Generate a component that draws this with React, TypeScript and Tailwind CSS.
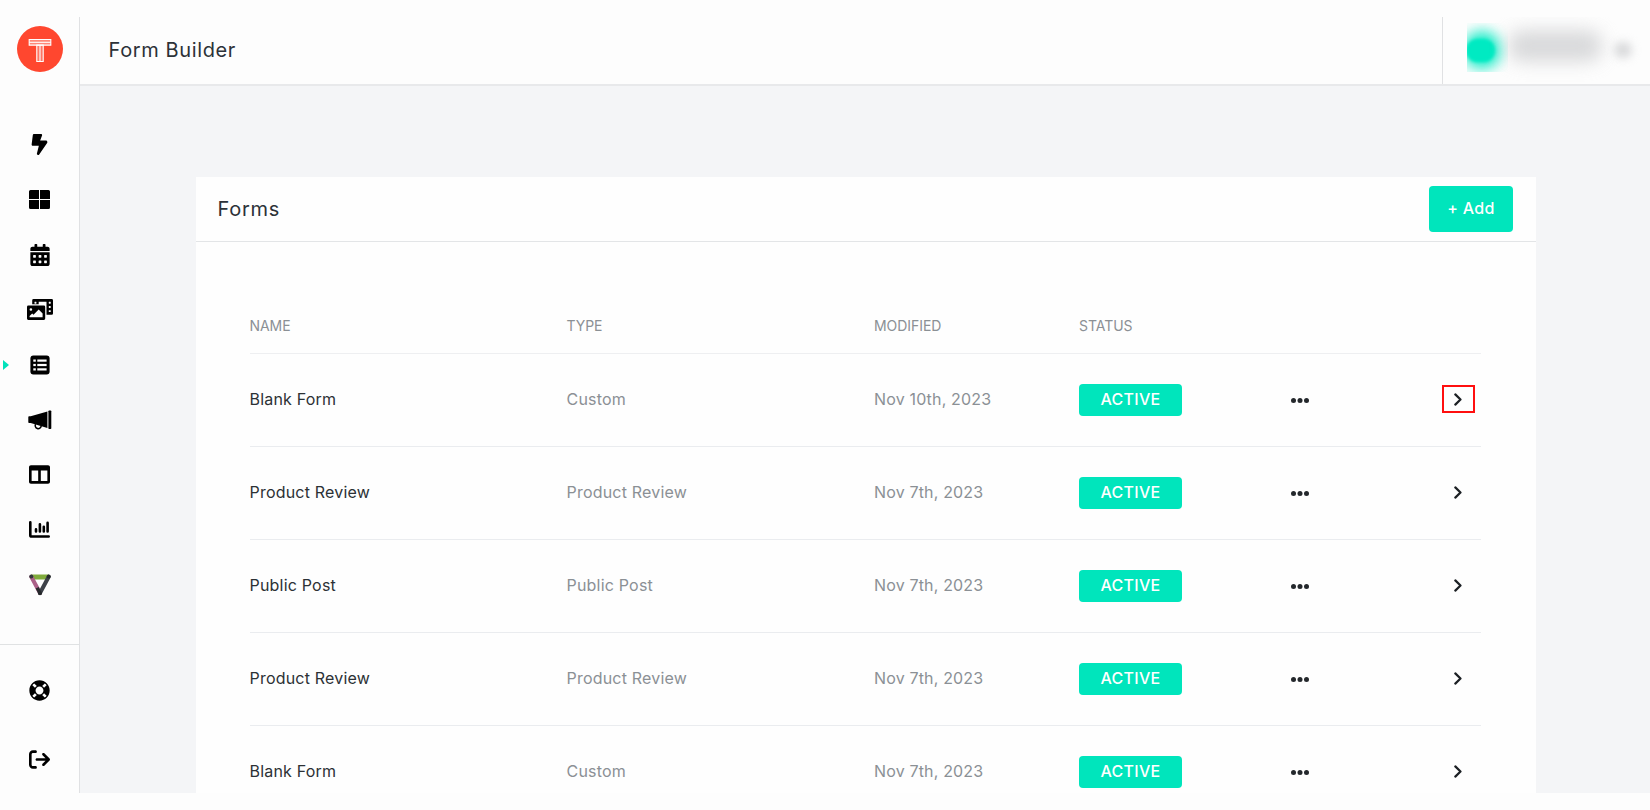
import React from 'react'
import { FaCalendarAlt, FaColumns, FaLifeRing, FaPhotoVideo } from 'react-icons/fa'
import { FaArrowRightFromBracket, FaBoltLightning } from 'react-icons/fa6'

interface FormItem {
  name: string
  type: string
  modified: string
  highlighted?: boolean
}

const forms: FormItem[] = [
  { name: 'Blank Form', type: 'Custom', modified: 'Nov 10th, 2023', highlighted: true },
  { name: 'Product Review', type: 'Product Review', modified: 'Nov 7th, 2023' },
  { name: 'Public Post', type: 'Public Post', modified: 'Nov 7th, 2023' },
  { name: 'Product Review', type: 'Product Review', modified: 'Nov 7th, 2023' },
  { name: 'Blank Form', type: 'Custom', modified: 'Nov 7th, 2023' },
]

const Logo = () => (
  <svg viewBox="0 0 46 46" className="h-[46px] w-[46px]">
    <circle cx="23" cy="23" r="23" fill="#ff472f" />
    <g fill="none" stroke="#fff" strokeWidth="1.100">
      <path d="M12.200 13.500h21.600v5.600H12.200z" fill="#fff" fillOpacity=".35" />
      <path d="M12.200 16.300h21.600" />
      <path d="M19.800 19.100h6.400v16.400h-6.400z" fill="#fff" fillOpacity=".25" />
      <path d="M23 19.100v16.400" />
    </g>
  </svg>
)

const TilesIcon = () => (
  <svg viewBox="0 0 21 19" className="h-[19px] w-[21px]">
    <path d="M1.5 0H10v9H0V1.5A1.5 1.5 0 0 1 1.5 0zM11 0h8.5A1.5 1.5 0 0 1 21 1.5V9H11zM0 10h10v9H1.5A1.5 1.5 0 0 1 0 17.500zM11 10h10v7.500a1.500 1.500 0 0 1-1.500 1.500H11z" />
  </svg>
)

const ListIcon = () => (
  <svg viewBox="0 0 20 20" className="h-5 w-5">
    <rect x=".4" y=".4" width="19.200" height="19.200" rx="3" />
    <g fill="#fff">
      <rect x="3.300" y="4.500" width="2.500" height="2.200" />
      <rect x="3.300" y="8.900" width="2.500" height="2.200" />
      <rect x="3.300" y="13.300" width="2.500" height="2.200" />
      <rect x="7.300" y="4.500" width="9.300" height="2.200" />
      <rect x="7.300" y="8.900" width="9.300" height="2.200" />
      <rect x="7.300" y="13.300" width="9.300" height="2.200" />
    </g>
  </svg>
)

const MegaphoneIcon = () => (
  <svg viewBox="0 0 24 20" className="h-5 w-6">
    <path d="M.3 7.200c0-.6.500-1 1-1h1.400L19.400 1.500v16.600L2.700 13H1.300c-.5 0-1-.4-1-1z" />
    <rect x="20.400" y=".5" width="2.900" height="18.600" rx=".8" />
    <path
      d="M7.600 14.200a3 3 0 1 0 5.600 1.700"
      fill="none"
      stroke="currentColor"
      strokeWidth="1.500"
    />
  </svg>
)

const ChartIcon = () => (
  <svg viewBox="0 0 21 17" className="h-[17px] w-[21px]">
    <g fill="none" stroke="currentColor" strokeLinecap="round">
      <path d="M1.300 1.300v12.900c0 .8.500 1.300 1.300 1.300h17.100" strokeWidth="2.600" />
      <path d="M7 8.400v2M10.900 3.200v7.200M14.800 5.800v4.600M18.600 1.900v8.500" strokeWidth="2.600" />
    </g>
  </svg>
)

const TriangleIcon = () => (
  <svg viewBox="0 0 22 22" className="h-[22px] w-[22px]">
    <g fill="none" strokeLinecap="round">
      <path d="M2 3h18" stroke="#80ab3c" strokeWidth="5" strokeLinecap="butt" />
      <path d="M2.300 2.800L11 19" stroke="#ab6088" strokeWidth="4" />
      <path d="M11 19l8.700-16.200" stroke="#3d4148" strokeWidth="4" />
    </g>
    <circle cx="2.300" cy="2.600" r="2" fill="#33373b" />
    <circle cx="19.700" cy="2.600" r="2" fill="#26292c" />
    <circle cx="11" cy="19.200" r="2" fill="#26292c" />
    <path d="M8.200 13.800l2.800 5.400" stroke="#26292c" strokeWidth="3.500" />
  </svg>
)

const navItems = [
  { key: 'activity', icon: <FaBoltLightning className="h-[21px] w-[21px]" /> },
  { key: 'dashboard', icon: <TilesIcon /> },
  { key: 'calendar', icon: <FaCalendarAlt className="h-[22px] w-[22px]" /> },
  { key: 'media', icon: <FaPhotoVideo className="h-[21px] w-[26px]" /> },
  { key: 'forms', icon: <ListIcon />, active: true },
  { key: 'campaigns', icon: <MegaphoneIcon /> },
  { key: 'layouts', icon: <FaColumns className="h-[21px] w-[21px]" /> },
  { key: 'reports', icon: <ChartIcon /> },
  { key: 'integrations', icon: <TriangleIcon /> },
]

const Sidebar = () => (
  <aside className="flex w-20 shrink-0 flex-col border-r border-[#e0e1e3] text-black">
    <div className="flex h-[100px] justify-center pt-[9px]">
      <Logo />
    </div>
    <nav className="flex h-[528px] flex-col border-b border-[#e0e2e3]">
      {navItems.map((item) => (
        <a
          key={item.key}
          href="#"
          className="relative flex h-[55px] shrink-0 items-center justify-center"
        >
          {item.active && (
            <span className="absolute left-[3px] top-[23px] h-0 w-0 border-y-[5px] border-l-[6px] border-y-transparent border-l-[#00e2bb]" />
          )}
          {item.icon}
        </a>
      ))}
    </nav>
    <a href="#" className="flex h-[91px] items-center justify-center">
      <FaLifeRing className="h-[21px] w-[21px]" />
    </a>
    <a href="#" className="flex h-[47px] items-center justify-center">
      <FaArrowRightFromBracket className="h-[21px] w-[21px]" />
    </a>
  </aside>
)

const UserMenu = () => (
  <div className="flex w-[208px] border-l border-[#e0e1e3] pl-6 pt-[6px]">
    <div className="flex h-[49px] w-[41px] items-center overflow-hidden">
      <div className="mt-[4px] h-[38px] w-[38px] shrink-0 -translate-x-[4px] rounded-full bg-[#00eac2] opacity-90 blur-[7px]" />
      <div className="-ml-[39px] mt-[5px] h-[23px] w-[29px] shrink-0 rounded-full bg-[#00eac2] blur-[1.500px]" />
    </div>
    <div className="mt-[7px] h-[32px] w-[94px] rounded-[14px] bg-[#cdced0] opacity-75 blur-[9px]" />
    <div className="ml-[12px] mt-[19px] h-[16px] w-[18px] rounded-full bg-[#cfd0d2] opacity-80 blur-[5px]" />
  </div>
)

const Chevron = () => (
  <svg
    viewBox="0 0 8 13"
    className="h-[13px] w-2"
    fill="none"
    stroke="#1c2024"
    strokeWidth="2.200"
    strokeLinecap="round"
    strokeLinejoin="round"
  >
    <path d="M1.300 1.400l5.200 5.100-5.200 5.100" />
  </svg>
)

const Dots = () => (
  <svg viewBox="0 0 18 5" className="mt-[2px] h-[5px] w-[18px]" fill="#24282c">
    <circle cx="2.500" cy="2.500" r="2.500" />
    <circle cx="9" cy="2.500" r="2.500" />
    <circle cx="15.500" cy="2.500" r="2.500" />
  </svg>
)

const columns = 'grid grid-cols-[317px_307.500px_205px_212px_1fr] items-center'

const FormRow: React.FC<{ form: FormItem }> = ({ form }) => (
  <div
    className={`${columns} h-[92.900px] border-b border-[#eaecef] text-[16px] tracking-[0.200px] text-[#8b9095]`}
  >
    <span className="pb-[2px] text-[#2c3135]">{form.name}</span>
    <span className="pb-[2px]">{form.type}</span>
    <span className="pb-[2px] tracking-[0.160px]">{form.modified}</span>
    <span className="flex h-8 w-[103px] items-center justify-center rounded bg-[#00e5bc] pb-[2px] font-medium tracking-[0.300px] text-white">
      ACTIVE
    </span>
    <div className="flex items-center justify-between pr-[6px]">
      <Dots />
      <button
        className={`-mt-[2px] flex h-7 w-[33px] items-center justify-center border-2 pr-[2px] pt-[2px] ${
          form.highlighted ? 'border-[#ff0f0f]' : 'border-transparent'
        }`}
      >
        <Chevron />
      </button>
    </div>
  </div>
)

const App = () => (
  <div className="h-[810px] w-[1650px] overflow-hidden bg-[#fdfdfd] py-[17px] font-['Inter','Liberation_Sans',sans-serif]">
    <div className="flex h-[776px] overflow-hidden">
      <Sidebar />
      <div className="flex min-w-0 flex-1 flex-col">
        <header className="flex h-[69px] shrink-0 justify-between border-b-2 border-[#e8e9eb]">
          <h1 className="pl-[28.500px] pt-[18px] text-[20px] leading-[30px] tracking-[0.620px] text-[#2c3238]">
            Form Builder
          </h1>
          <UserMenu />
        </header>
        <main className="flex-1 overflow-hidden bg-[#f4f5f7] pl-[116px] pr-[114px] pt-[91px]">
          <section className="h-[640px] bg-[#fefefe]">
            <div className="flex h-[65px] items-center justify-between border-b border-[#e3e5e7] pl-[21.500px] pr-[23px]">
              <h2 className="text-[20px] tracking-[0.750px] text-[#2c3238]">Forms</h2>
              <button className="h-[46px] w-[84px] rounded bg-[#00e5bc] pb-[2px] text-[16px] font-medium tracking-[0.300px] text-white">
                + Add
              </button>
            </div>
            <div className="pl-[53.500px] pr-[55px] pt-[57px]">
              <div
                className={`${columns} h-[55px] border-b border-[#eeeff1] pb-[2px] text-[14px] tracking-[-0.050px] text-[#8b9095]`}
              >
                <span>NAME</span>
                <span>TYPE</span>
                <span>MODIFIED</span>
                <span>STATUS</span>
              </div>
              {forms.map((form, i) => (
                <FormRow key={i} form={form} />
              ))}
            </div>
          </section>
        </main>
      </div>
    </div>
  </div>
)

export default App
